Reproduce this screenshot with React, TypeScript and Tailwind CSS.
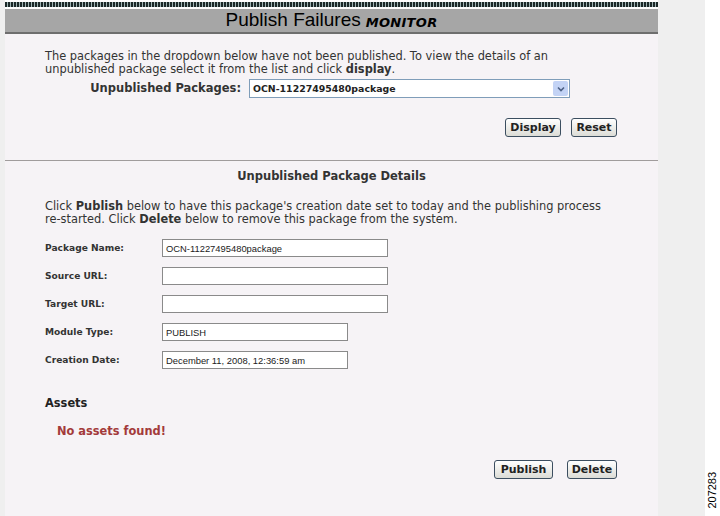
import React from "react";

const font = { fontFamily: '"DejaVu Sans", Verdana, sans-serif' };
const arial = { fontFamily: '"Liberation Sans", Arial, sans-serif' };

function Btn({ label, w }: { label: string; w: string }) {
  return (
    <button
      type="button"
      className={`h-[19px] rounded-[3px] border border-[#3c4e60] bg-gradient-to-b from-white to-[#dcdcd6] text-[11px] font-bold leading-none text-[#222] ${w}`}
    >
      {label}
    </button>
  );
}

function Field({ label, value, wide }: { label: string; value: string; wide: boolean }) {
  return (
    <div className="flex h-[28px] items-center">
      <div className="w-[117px] text-[9.1px] font-bold text-[#333]">{label}</div>
      <div
        className={`flex h-[18px] items-center border border-[#8a8a8a] bg-white px-[3px] text-[9.4px] text-[#222] ${
          wide ? "w-[226px]" : "w-[186px]"
        }`}
        style={arial}
      >
        {value}
      </div>
    </div>
  );
}

export default function App() {
  return (
    <div className="flex h-[516px] w-[720px] bg-white" style={font}>
      <div className="w-[5px] bg-[#efefef]" />
      <div className="flex w-[653px] flex-col bg-[#f6f3f6]">
        <div className="h-[2px] bg-white" />
        <div className="h-[5px] bg-[repeating-linear-gradient(90deg,#1b2828_0px,#1b2828_2px,#9fb3b3_2px,#9fb3b3_3px)]" />
        <div className="h-[2px] bg-white" />
        <div className="flex h-[25px] items-end justify-center border-b-2 border-[#6e6e6e] bg-[#a6a6a6] pb-[3px]">
          <span className="text-[19px] leading-none text-black" style={arial}>
            Publish Failures
          </span>
          <span className="ml-[5px] text-[13px] font-bold italic leading-none tracking-[0.3px] text-black">
            MONITOR
          </span>
        </div>

        <div className="px-[40px] pt-[16px] text-[11.4px] leading-[13px] text-[#333]">
          <p>
            The packages in the dropdown below have not been published. To view the details of an
            <br />
            unpublished package select it from the list and click <b>display</b>.
          </p>
          <div className="mt-[3px] flex items-center">
            <div className="w-[204px] pr-[8px] text-right text-[11.5px] font-bold">Unpublished Packages:</div>
            <div className="flex h-[19px] w-[321px] items-center justify-between border border-[#7f9db9] bg-white pl-[3px]">
              <span className="text-[9.4px] font-bold text-[#222]">OCN-11227495480package</span>
              <span className="mr-[1px] flex h-[15px] w-[15px] items-center justify-center rounded-[2px] bg-[#c3d3f5]">
                <svg width="8" height="6" viewBox="0 0 8 6">
                  <path d="M1 1.5 L4 4.5 L7 1.5" fill="none" stroke="#4d6185" strokeWidth="1.6" />
                </svg>
              </span>
            </div>
          </div>
          <div className="mt-[20px] flex justify-end gap-[10px] pr-[1px]">
            <Btn label="Display" w="w-[56px]" />
            <Btn label="Reset" w="w-[46px]" />
          </div>
        </div>

        <div className="mt-[23px] h-px bg-[#a09c9c]" />

        <div className="px-[40px] text-[11.4px] leading-[13px] text-[#333]">
          <div className="mt-[9px] text-center text-[11.5px] font-bold">Unpublished Package Details</div>
          <p className="mt-[17px]">
            Click <b>Publish</b> below to have this package's creation date set to today and the publishing process
            <br />
            re-started. Click <b>Delete</b> below to remove this package from the system.
          </p>
          <div className="mt-[8px]">
            <Field label="Package Name:" value="OCN-11227495480package" wide />
            <Field label="Source URL:" value="" wide />
            <Field label="Target URL:" value="" wide />
            <Field label="Module Type:" value="PUBLISH" wide={false} />
            <Field label="Creation Date:" value="December 11, 2008, 12:36:59 am" wide={false} />
          </div>
          <div className="mt-[23px] font-bold text-[#222]">Assets</div>
          <div className="mt-[15px] pl-[12px] font-bold text-[#a33a3a]">No assets found!</div>
          <div className="mt-[22px] flex justify-end gap-[14px] pr-[1px]">
            <Btn label="Publish" w="w-[59px]" />
            <Btn label="Delete" w="w-[50px]" />
          </div>
        </div>
      </div>
      <div className="w-[47px] bg-[#efefef]" />
      <div className="flex w-[15px] flex-col justify-end pb-[5px]">
        <div className="flex h-[42px] items-center justify-center">
          <span className="-rotate-90 whitespace-nowrap text-[11px] text-black" style={arial}>
            207283
          </span>
        </div>
      </div>
    </div>
  );
}
